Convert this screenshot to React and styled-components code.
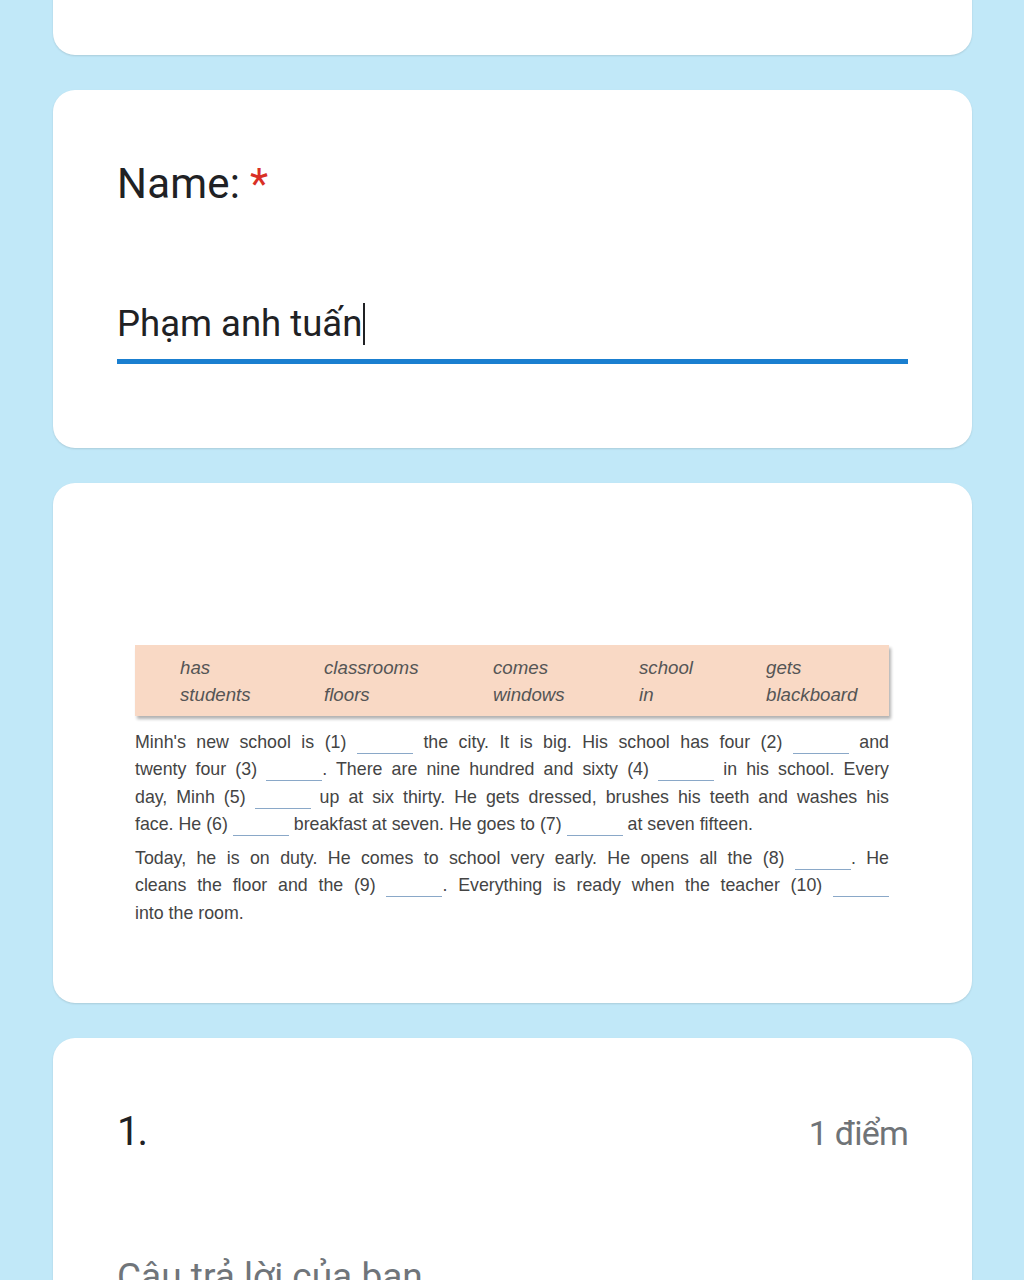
import React from "react";
import styled, { createGlobalStyle } from "styled-components";

const GlobalStyle = createGlobalStyle`
  html, body { margin: 0; padding: 0; }
  body {
    background: #c1e8f8;
    font-family: Roboto, "Noto Sans", Arial, sans-serif;
    overflow: hidden;
  }
`;

const Page = styled.div`
  display: flex;
  flex-direction: column;
  gap: 35px;
  padding: 0 52px 0 53px;
  height: 1280px;
  overflow: hidden;
`;

const Card = styled.section`
  background: #fff;
  border-radius: 22px;
  box-shadow: 0 1px 2px rgba(0, 0, 0, 0.12);
  flex-shrink: 0;
  padding: ${(p) => p.$pad || "0 64px"};
  margin-top: ${(p) => p.$mt || "0"};
  height: ${(p) => p.$h || "auto"};
  box-sizing: border-box;
`;

const Label = styled.div`
  font-size: 42px;
  line-height: 50px;
  color: #202124;
  letter-spacing: 0.2px;
`;

const Star = styled.span`
  color: #d93025;
  margin-left: 10px;
`;

const InputLine = styled.div`
  margin-top: 94px;
  font-size: 36.5px;
  line-height: 40px;
  color: #202124;
  padding-bottom: 14px;
  border-bottom: 5px solid #1a7fd0;
  display: flex;
  align-items: center;
`;

const Caret = styled.span`
  display: inline-block;
  width: 2px;
  height: 42px;
  background: #202124;
  margin-left: 1px;
`;

const WordBank = styled.div`
  background: #f9d9c5;
  box-shadow: 2px 3px 3px rgba(0, 0, 0, 0.3);
  padding: 9px 0 8px 45px;
  display: grid;
  grid-template-columns: 144px 169px 146px 127px 1fr;
  font-family: "Liberation Sans", Arial, sans-serif;
  font-style: italic;
  font-size: 18.7px;
  line-height: 27px;
  color: #555;
`;

const Passage = styled.div`
  margin-top: 13px;
  font-family: "Liberation Sans", Arial, sans-serif;
  font-size: 17.8px;
  line-height: 27.3px;
  color: #444;
  display: flex;
  flex-direction: column;
  gap: 7px;
`;

const Para = styled.div``;

const Line = styled.div`
  text-align: justify;
  text-align-last: ${(p) => (p.$last ? "left" : "justify")};
  white-space: nowrap;
  letter-spacing: 0;
`;

const Blank = styled.span`
  display: inline-block;
  width: 56px;
  height: 0;
  border-bottom: 1px solid #8aa8c8;
  vertical-align: -6px;
`;

const ImageArea = styled.div`
  padding: 162px 83px 76px 82px;
`;

const QHead = styled.div`
  display: flex;
  justify-content: space-between;
  align-items: baseline;
`;

const QNum = styled.div`
  font-size: 40px;
  line-height: 50px;
  color: #202124;
  letter-spacing: -2px;
`;

const Points = styled.div`
  font-size: 34px;
  color: #6f7377;
  letter-spacing: -0.8px;
`;

const Placeholder = styled.div`
  margin-top: 98px;
  font-size: 37px;
  line-height: 44px;
  color: #70757a;
`;

const B = () => <Blank />;

export default function App() {
  return (
    <>
      <GlobalStyle />
      <Page>
        <Card $mt="-85px" $h="140px" />
        <Card $pad="69px 64px 84px">
          <Label>
            Name:<Star>*</Star>
          </Label>
          <InputLine>
            Phạm anh tuấn
            <Caret />
          </InputLine>
        </Card>
        <Card $pad="0">
          <ImageArea>
            <WordBank>
              <span>has</span>
              <span>classrooms</span>
              <span>comes</span>
              <span>school</span>
              <span>gets</span>
              <span>students</span>
              <span>floors</span>
              <span>windows</span>
              <span>in</span>
              <span>blackboard</span>
            </WordBank>
            <Passage>
              <Para>
                <Line>
                  Minh's new school is (1) <B /> the city. It is big. His school has four (2) <B /> and
                </Line>
                <Line>
                  twenty four (3) <B />. There are nine hundred and sixty (4) <B /> in his school. Every
                </Line>
                <Line>
                  day, Minh (5) <B /> up at six thirty. He gets dressed, brushes his teeth and washes his
                </Line>
                <Line $last>
                  face. He (6) <B /> breakfast at seven. He goes to (7) <B /> at seven fifteen.
                </Line>
              </Para>
              <Para>
                <Line>
                  Today, he is on duty. He comes to school very early. He opens all the (8) <B />. He
                </Line>
                <Line>
                  cleans the floor and the (9) <B />. Everything is ready when the teacher (10) <B />
                </Line>
                <Line $last>into the room.</Line>
              </Para>
            </Passage>
          </ImageArea>
        </Card>
        <Card $pad="69px 64px 60px">
          <QHead>
            <QNum>1.</QNum>
            <Points>1 điểm</Points>
          </QHead>
          <Placeholder>Câu trả lời của bạn</Placeholder>
        </Card>
      </Page>
    </>
  );
}
